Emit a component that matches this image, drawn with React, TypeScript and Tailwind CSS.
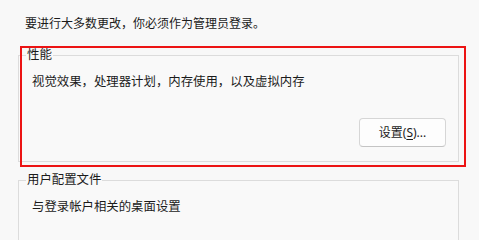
export default function App() {
  const font = "font-['Noto_Sans','Noto_Sans_CJK_SC',sans-serif]";

  return (
    <main className={`relative w-[479px] h-[240px] overflow-hidden bg-[#f8f8f8] text-[#1b1b1b] ${font}`}>
      <div className="pt-[16px] pl-[25px] text-[12px] leading-[16px]">
        要进行大多数更改，你必须作为管理员登录。
      </div>

      <fieldset className="mt-[15px] ml-[18px] w-[441px] border border-[#dcdcdc] bg-[#f9f9f9] pb-[14px]">
        <legend className="ml-[7px] px-[1px] text-[12.5px] leading-[16px]">性能</legend>
        <p className="pt-[11px] pl-[13px] text-[12.4px] leading-[16px]">
          视觉效果，处理器计划，内存使用，以及虚拟内存
        </p>
        <div className="mt-[28px] flex justify-end pr-[12px]">
          <button className="h-[29px] w-[87px] rounded-[4px] border border-[#d6d6d6] border-b-[#c4c4c4] bg-[#fdfdfd] text-[12px] leading-[16px] text-[#1b1b1b]">
            设置(<span className="underline underline-offset-2">S</span>)...
          </button>
        </div>
      </fieldset>

      <fieldset className="mt-[10px] ml-[18px] w-[441px] border border-[#dcdcdc] bg-[#f9f9f9] pb-[60px]">
        <legend className="ml-[7px] px-[1px] text-[12.4px] leading-[16px]">用户配置文件</legend>
        <p className="pt-[11px] pl-[13px] text-[12.4px] leading-[16px]">与登录帐户相关的桌面设置</p>
      </fieldset>

      {/* red highlight drawn over the performance group */}
      <div className="pointer-events-none absolute left-[20px] top-[46px] h-[121px] w-[446px] border-2 border-[#ec1313]" />
    </main>
  );
}
